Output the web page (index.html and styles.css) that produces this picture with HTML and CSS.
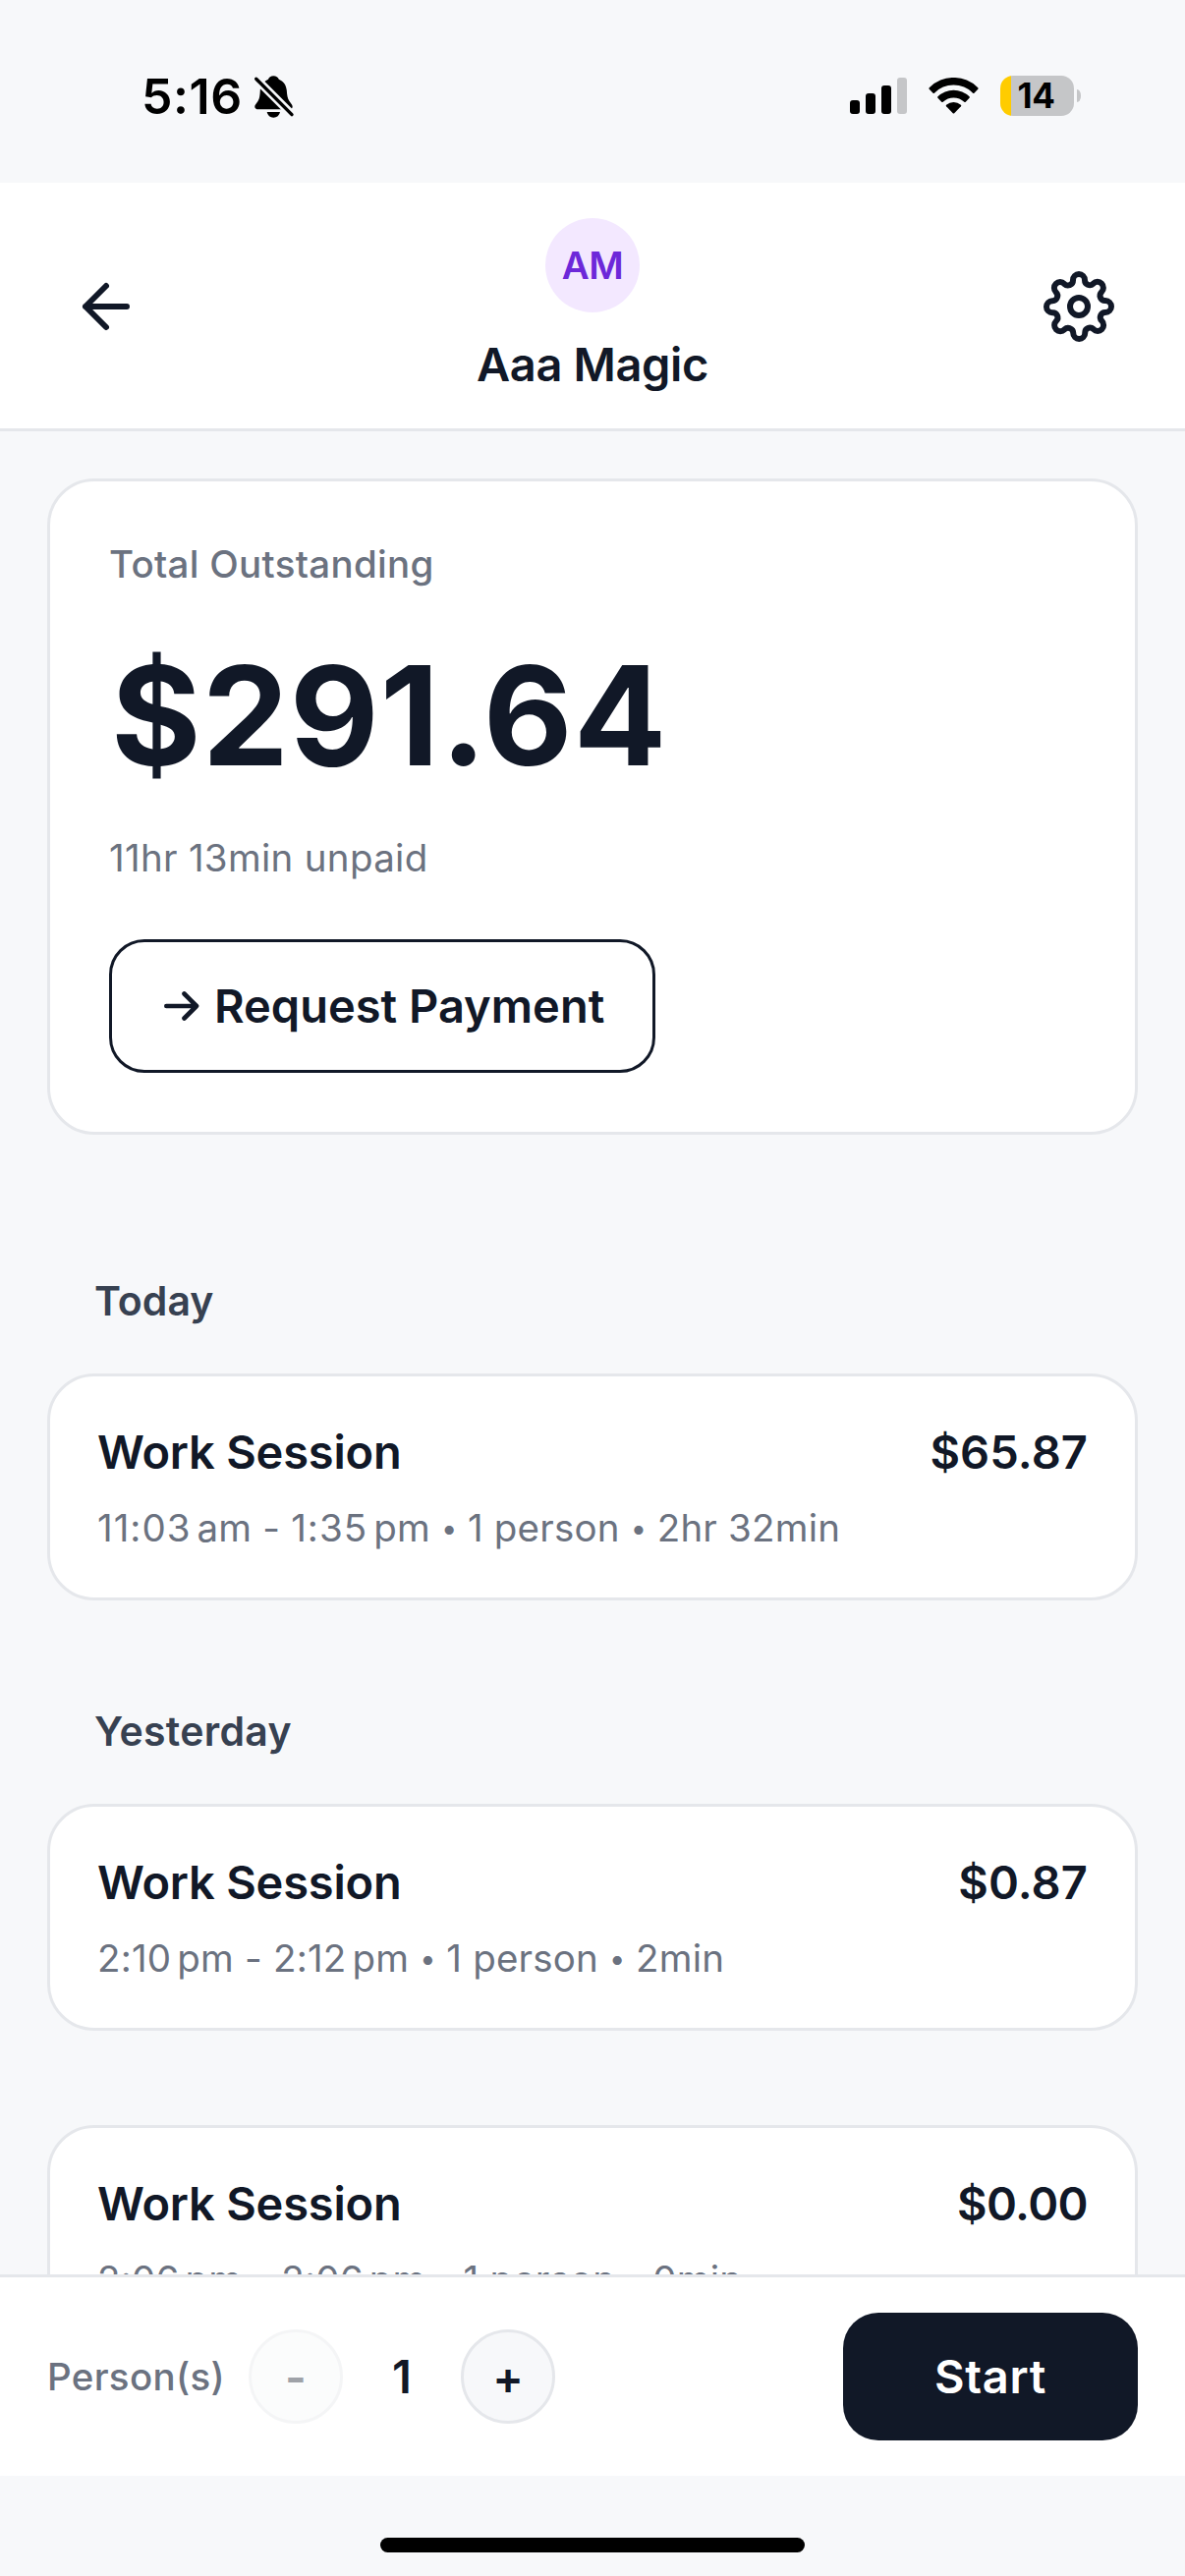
FILE: index.html
```html
<!DOCTYPE html>
<html lang="en">
<head>
<meta charset="utf-8">
<title>Aaa Magic</title>
<link rel="stylesheet" href="styles.css">
</head>
<body>
<div class="screen">
  <div class="status">
    <div class="status-left">
      <span class="clock">5:16</span>
      <svg class="bell" width="41" height="43" viewBox="0 0 41 43">
        <path d="M19.3 .2C22 .2 24 1.6 24.8 3.8 30 6 32.3 10 32.8 15 33.2 20 33.5 23 35.5 26L38 29.5C39.5 32 38.5 34.3 35.5 34.3H3.5C.5 34.3-.5 31.5 1 29.5L3.5 26C5.3 23 5.5 20 5.8 15 6.2 10 9 6 14 3.8 14.8 1.6 16.6 .2 19.3 .2Z"/>
        <path d="M12.7 37H26C25.2 40.5 22.8 42.7 19.3 42.7 15.9 42.7 13.5 40.5 12.7 37Z"/>
        <path class="bell-gap" d="M-1 .6 41 42.6"/>
        <path class="bell-slash" d="M1.7 3.3 38 39.6"/>
      </svg>
    </div>
    <div class="status-right">
      <div class="signal"><i class="bar b1"></i><i class="bar b2"></i><i class="bar b3"></i><i class="bar b4"></i></div>
      <svg class="wifi" width="51" height="37" viewBox="0 0 17 12" preserveAspectRatio="none">
        <path d="M8.5 2.47c2.43 0 4.76.93 6.52 2.6.13.13.34.13.47 0l1.26-1.27a.34.34 0 0 0 0-.49 11.9 11.9 0 0 0-16.5 0 .34.34 0 0 0 0 .49l1.27 1.27c.13.13.34.13.47 0A9.42 9.42 0 0 1 8.5 2.47z"/>
        <path d="M8.5 6.65c1.33 0 2.62.5 3.6 1.38.14.13.35.13.48 0l1.27-1.28a.35.35 0 0 0 0-.5 7.8 7.8 0 0 0-10.7 0 .35.35 0 0 0 0 .5l1.27 1.28c.13.13.34.13.48 0A5.4 5.4 0 0 1 8.5 6.65z"/>
        <path d="M10.98 9.47a.35.35 0 0 0-.01-.5 3.86 3.86 0 0 0-4.94 0 .35.35 0 0 0-.01.5l2.23 2.25c.14.13.35.13.49 0z"/>
      </svg>
      <div class="battery">
        <div class="battery-body">14</div>
        <div class="battery-nub"></div>
      </div>
    </div>
  </div>

  <header class="header">
    <svg class="icon" viewBox="0 0 24 24"><path d="M19 12H5M12 19l-7-7 7-7"/></svg>
    <div class="who">
      <div class="avatar">AM</div>
      <div class="name">Aaa Magic</div>
    </div>
    <svg class="icon" viewBox="0 0 24 24"><circle cx="12" cy="12" r="3"/><path d="M19.4 15a1.65 1.65 0 0 0 .33 1.82l.06.06a2 2 0 0 1 0 2.83 2 2 0 0 1-2.83 0l-.06-.06a1.65 1.65 0 0 0-1.82-.33 1.65 1.65 0 0 0-1 1.51V21a2 2 0 0 1-2 2 2 2 0 0 1-2-2v-.09A1.65 1.65 0 0 0 9 19.4a1.65 1.65 0 0 0-1.82.33l-.06.06a2 2 0 0 1-2.83 0 2 2 0 0 1 0-2.83l.06-.06a1.65 1.65 0 0 0 .33-1.82 1.65 1.65 0 0 0-1.51-1H3a2 2 0 0 1-2-2 2 2 0 0 1 2-2h.09A1.65 1.65 0 0 0 4.6 9a1.65 1.65 0 0 0-.33-1.82l-.06-.06a2 2 0 0 1 0-2.83 2 2 0 0 1 2.83 0l.06.06a1.65 1.65 0 0 0 1.82.33H9a1.65 1.65 0 0 0 1-1.51V3a2 2 0 0 1 2-2 2 2 0 0 1 2 2v.09a1.65 1.65 0 0 0 1 1.51 1.65 1.65 0 0 0 1.82-.33l.06-.06a2 2 0 0 1 2.83 0 2 2 0 0 1 0 2.83l-.06.06a1.65 1.65 0 0 0-.33 1.82V9a1.65 1.65 0 0 0 1.51 1H21a2 2 0 0 1 2 2 2 2 0 0 1-2 2h-.09a1.65 1.65 0 0 0-1.51 1z"/></svg>
  </header>

  <main class="content">
    <section class="card summary">
      <div class="label">Total Outstanding</div>
      <div class="total">$291.64</div>
      <div class="unpaid">11hr 13min unpaid</div>
      <button class="request">
        <svg width="36" height="30" viewBox="0 0 36 30"><path d="M2.3 15H33M20.5 2.5 33 15 20.5 27.5"/></svg>
        <span>Request Payment</span>
      </button>
    </section>

    <h2 class="day day-first">Today</h2>
    <article class="card session">
      <div class="row"><span class="title">Work Session</span><span class="amount">$65.87</span></div>
      <div class="meta"><span class="wide">11:03</span><span class="ap">am</span> - <span class="wide">1:35</span><span class="ap">pm</span> <span class="dot">•</span> 1 person <span class="dot">•</span> 2hr 32min</div>
    </article>

    <h2 class="day day-long">Yesterday</h2>
    <article class="card session">
      <div class="row"><span class="title">Work Session</span><span class="amount">$0.87</span></div>
      <div class="meta">2:10<span class="ap">pm</span> - 2:12<span class="ap">pm</span> <span class="dot">•</span> 1 person <span class="dot">•</span> 2min</div>
    </article>
    <article class="card session session-next">
      <div class="row"><span class="title">Work Session</span><span class="amount amount-tight">$0.00</span></div>
      <div class="meta">2:06<span class="ap">pm</span> - 2:06<span class="ap">pm</span> <span class="dot">•</span> 1 person <span class="dot">•</span> 0min</div>
    </article>
  </main>

  <footer class="footer">
    <span class="persons">Person(s)</span>
    <button class="step step-off">-</button>
    <span class="count">1</span>
    <button class="step">+</button>
    <button class="start">Start</button>
  </footer>
  <div class="home"><div class="home-bar"></div></div>
</div>
</body>
</html>
```
FILE: styles.css
```css
* { box-sizing: border-box; }

body {
  margin: 0;
  background: #f7f8fa;
  color: #111827;
  font-family: Inter, "Liberation Sans", sans-serif;
}

button {
  margin: 0;
  padding: 0;
  font: inherit;
  color: inherit;
}

.screen {
  width: 1206px;
  height: 2622px;
  display: flex;
  flex-direction: column;
  overflow: hidden;
}

/* Status bar */
.status {
  height: 186px;
  flex: none;
  display: flex;
  justify-content: space-between;
  align-items: flex-start;
  padding: 77px 106px 0 144px;
  color: #000;
}

.status-left { display: flex; }

.clock {
  width: 115px;
  font-size: 50px;
  font-weight: 600;
  line-height: 42px;
  letter-spacing: 0.6px;
}

.bell { overflow: visible; }
.bell-gap { stroke: #f7f8fa; stroke-width: 8.5; }
.bell-slash { stroke: #000; stroke-width: 3.4; stroke-linecap: round; }

.status-right { display: flex; }

.signal {
  display: flex;
  align-items: flex-end;
  gap: 6px;
  height: 39px;
  margin-right: 22px;
}

.bar { width: 10px; border-radius: 3px; background: #000; }
.b1 { height: 14px; }
.b2 { height: 21px; }
.b3 { height: 29px; }
.b4 { height: 37px; background: #c5c6c8; }

.wifi { margin: 2px 22px 0 0; }

.battery { display: flex; align-items: center; gap: 3px; height: 41px; }

.battery-body {
  width: 75px;
  height: 41px;
  border-radius: 13px;
  background: linear-gradient(90deg, #ffcc00 11.5px, #c5c6c8 11.5px);
  font-size: 35px;
  font-weight: 700;
  line-height: 41px;
  text-align: center;
  letter-spacing: -0.5px;
  padding-right: 2px;
}

.battery-nub {
  width: 4px;
  height: 13px;
  border-radius: 0 4px 4px 0 / 0 6px 6px 0;
  background: #c5c6c8;
}

/* Header */
.header {
  height: 253px;
  flex: none;
  display: flex;
  justify-content: space-between;
  align-items: flex-start;
  padding: 0 72px;
  background: #fff;
  border-bottom: 3px solid #e5e7eb;
}

.icon {
  width: 72px;
  height: 72px;
  margin-top: 90px;
  fill: none;
  stroke: #111827;
  stroke-width: 2;
  stroke-linecap: round;
  stroke-linejoin: round;
}

.who {
  display: flex;
  flex-direction: column;
  align-items: center;
  gap: 18px;
  padding-top: 36px;
}

.avatar {
  width: 96px;
  height: 96px;
  border-radius: 50%;
  background: #f3e8ff;
  color: #6d28d9;
  font-size: 38.5px;
  font-weight: 560;
  line-height: 96px;
  letter-spacing: -0.5px;
  text-align: center;
}

.name {
  font-size: 47px;
  font-weight: 580;
  line-height: 70px;
  letter-spacing: -0.4px;
}

/* Scrolling content */
.content {
  flex: 1;
  min-height: 0;
  overflow: hidden;
  padding: 48px 48px 0;
}

.card {
  background: #fff;
  border: 3px solid #e5e7eb;
  border-radius: 48px;
}

.summary { padding: 60px; }

.label {
  font-size: 38.5px;
  font-weight: 500;
  line-height: 48px;
  letter-spacing: 0.3px;
  color: #6b7280;
}

.total {
  margin-top: 46px;
  padding-left: 2px;
  font-size: 140px;
  font-weight: 700;
  line-height: 168px;
  letter-spacing: 1px;
}

.unpaid {
  margin-top: 37px;
  font-size: 38.5px;
  line-height: 48px;
  letter-spacing: 0.3px;
  color: #6b7280;
}

.request {
  display: flex;
  align-items: center;
  gap: 15px;
  width: 556px;
  height: 136px;
  margin-top: 59px;
  padding-left: 53px;
  background: #fff;
  border: 3px solid #111827;
  border-radius: 36px;
  font-size: 47px;
  font-weight: 580;
  white-space: nowrap;
}

.request span { padding-bottom: 2px; }

.request svg {
  fill: none;
  stroke: #111827;
  stroke-width: 4.6;
  stroke-linecap: round;
  stroke-linejoin: round;
}

.day {
  margin: 108px 48px 49px;
  font-size: 41px;
  font-weight: 600;
  line-height: 50px;
  color: #374151;
}

.day-first { margin-top: 144px; }
.day-long { letter-spacing: 0.3px; }

.session { height: 231px; padding: 48px; }
.session-next { margin-top: 96px; }

.row {
  display: flex;
  justify-content: space-between;
  font-size: 47px;
  font-weight: 590;
  line-height: 58px;
}

.title { letter-spacing: -0.2px; }
.amount { letter-spacing: 0.1px; }
.amount-tight { letter-spacing: -0.6px; }

.meta {
  margin-top: 24px;
  font-size: 38.5px;
  line-height: 48px;
  letter-spacing: 0.2px;
  color: #6b7280;
  white-space: nowrap;
}

.wide { letter-spacing: 1px; }
.ap { margin-left: 6px; }

.dot {
  display: inline-block;
  width: 16px;
  height: 48px;
  font-size: 29px;
  text-align: center;
  vertical-align: top;
  letter-spacing: 0;
  line-height: 50px;
}

/* Bottom bar */
.footer {
  height: 205px;
  flex: none;
  display: flex;
  align-items: center;
  padding: 0 48px;
  background: #fff;
  border-top: 3px solid #e5e7eb;
}

.persons {
  width: 205px;
  font-size: 38.5px;
  font-weight: 500;
  letter-spacing: 0.3px;
  color: #6b7280;
}

.step {
  width: 96px;
  height: 96px;
  border: 3px solid #e5e7eb;
  border-radius: 50%;
  background: #f7f8fa;
  font-size: 47px;
  font-weight: 600;
}

.step-off { opacity: 0.4; }

.count {
  width: 120px;
  padding-bottom: 1px;
  font-size: 47px;
  font-weight: 580;
  text-align: center;
}

.start {
  width: 300px;
  height: 130px;
  margin-left: auto;
  padding-bottom: 2px;
  border: 0;
  border-radius: 36px;
  background: #111827;
  color: #fff;
  font-size: 47px;
  font-weight: 580;
  letter-spacing: 0.7px;
}

.home { height: 102px; flex: none; padding-top: 63px; }

.home-bar {
  width: 432px;
  height: 15px;
  margin: 0 auto;
  border-radius: 8px;
  background: #000;
}
```
